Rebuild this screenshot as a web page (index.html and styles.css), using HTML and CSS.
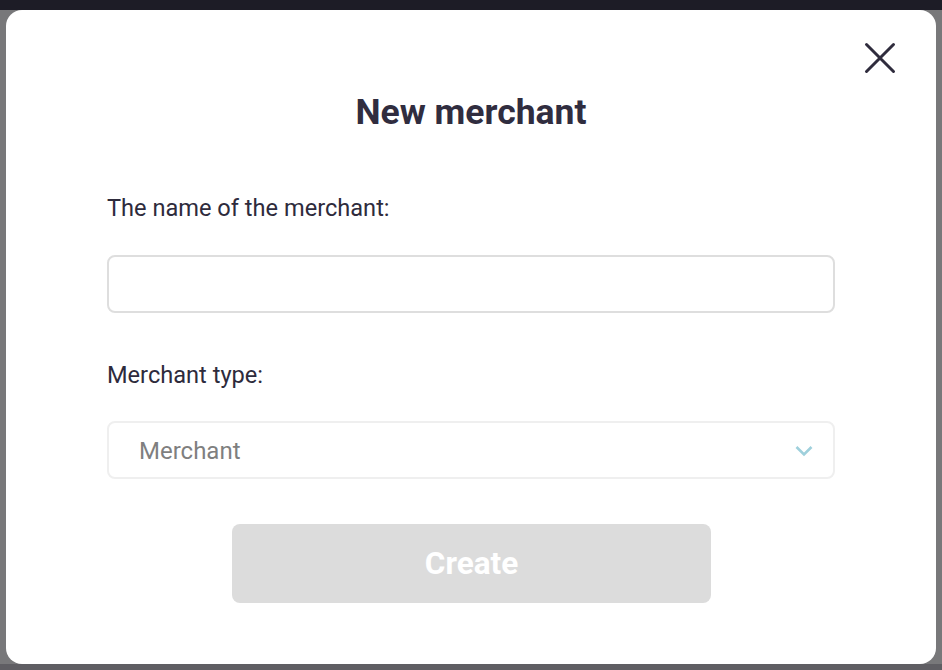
FILE: index.html
```html
<!DOCTYPE html>
<html>
<head>
<meta charset="utf-8">
<link rel="stylesheet" href="styles.css">
</head>
<body>
<div class="screen">
  <div class="topbar"></div>
  <div class="modal">
    <button class="close" aria-label="Close">
      <svg width="34" height="34" viewBox="0 0 34 34"><path d="M3.5 3.5 L30.5 30.5 M30.5 3.5 L3.5 30.5" stroke="#2f2c3d" stroke-width="3" stroke-linecap="round" fill="none"/></svg>
    </button>
    <h1 class="title">New merchant</h1>
    <label class="label">The name of the merchant:</label>
    <div class="input"></div>
    <label class="label label-second">Merchant type:</label>
    <div class="select">
      <span class="select-value">Merchant</span>
      <svg class="chevron" width="18" height="12" viewBox="0 0 18 12"><path d="M1.5 2 L9 9.5 L16.5 2" stroke="#9fd0dc" stroke-width="2.6" fill="none"/></svg>
    </div>
    <div class="actions">
      <button class="create">Create</button>
    </div>
  </div>
</div>
</body>
</html>
```

FILE: styles.css
```css
html, body {
  margin: 0;
  padding: 0;
}
body {
  width: 942px;
  height: 670px;
  overflow: hidden;
  background: #78787a;
  font-family: Roboto, "Liberation Sans", sans-serif;
}
.screen {
  position: relative;
  width: 942px;
  height: 670px;
  background: linear-gradient(to bottom, #78787a 0, #78787a 664px, #5f5e63 664px);
}
.topbar {
  height: 10px;
  background: #1d1c26;
}
.modal {
  position: relative;
  margin-left: 6px;
  width: 930px;
  height: 654px;
  box-sizing: border-box;
  background: #fff;
  border-radius: 16px;
  padding: 0 101px;
}
.close {
  position: absolute;
  top: 31px;
  right: 39px;
  width: 34px;
  height: 34px;
  padding: 0;
  border: 0;
  background: none;
}
.close svg { display: block; }
.title {
  margin: 0;
  padding-top: 81px;
  text-align: center;
  font-size: 35.5px;
  line-height: 42px;
  font-weight: 700;
  color: #302d3f;
}
.label {
  display: block;
  margin-top: 61px;
  font-size: 23.6px;
  line-height: 28px;
  color: #2e2b3c;
}
.label-second {
  margin-top: 48px;
}
.input {
  margin-top: 33px;
  height: 58px;
  box-sizing: border-box;
  border: 2px solid #dedede;
  border-radius: 8px;
}
.select {
  margin-top: 32px;
  height: 58px;
  box-sizing: border-box;
  border: 2px solid #efefef;
  border-radius: 8px;
  display: flex;
  align-items: center;
  justify-content: space-between;
  padding: 2px 20px 0 30px;
}
.select-value {
  font-size: 24px;
  color: #7f7f7f;
}
.chevron { display: block; }
.actions {
  display: flex;
  justify-content: center;
  margin-top: 45px;
}
.create {
  width: 479px;
  height: 79px;
  margin-left: 1px;
  padding: 0;
  border: 0;
  border-radius: 8px;
  background: #dcdcdc;
  color: #fff;
  font-family: Roboto, "Liberation Sans", sans-serif;
  font-size: 31.5px;
  font-weight: 700;
}
```
